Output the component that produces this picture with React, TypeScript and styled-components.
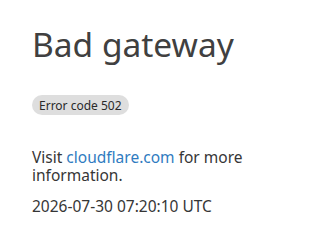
import React from "react";
import styled, { createGlobalStyle } from "styled-components";

const Global = createGlobalStyle`
  html, body { margin: 0; padding: 0; background: #fff; }
  body { font-family: "Noto Sans", "Open Sans", sans-serif; color: #313131; }
`;

const Page = styled.main`
  padding: 24px 32px;
  display: flex;
  flex-direction: column;
  align-items: flex-start;
`;

const Title = styled.h1`
  margin: 0;
  font-size: 33.5px;
  font-weight: 400;
  line-height: 40px;
  color: #404040;
`;

const Badge = styled.span`
  margin-top: 31px;
  display: inline-flex;
  align-items: center;
  height: 20px;
  padding: 0 7px;
  border-radius: 10px;
  background: #dedede;
  font-size: 12px;
  color: #2a2a2a;
`;

const Text = styled.p<{ $top: number }>`
  margin: ${(p) => p.$top}px 0 0;
  font-size: 15.5px;
  line-height: 18px;
  color: #363636;
`;

const Link = styled.a`
  color: #2f7bbf;
  text-decoration: none;
`;

export default function App() {
  return (
    <>
      <Global />
      <Page>
        <Title>Bad gateway</Title>
        <Badge>Error code 502</Badge>
        <Text $top={33}>
          Visit <Link href="#">cloudflare.com</Link> for more
          <br />
          information.
        </Text>
        <Text $top={13}>2026-07-30 07:20:10 UTC</Text>
      </Page>
    </>
  );
}
